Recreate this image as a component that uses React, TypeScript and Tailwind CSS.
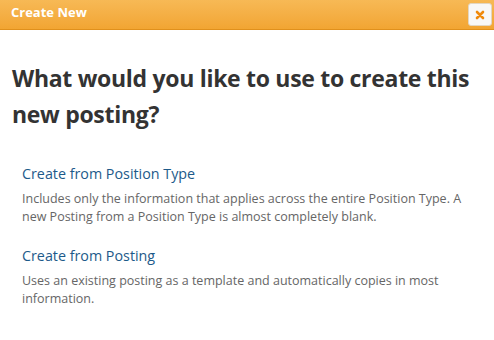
import React from "react";

const options = [
  {
    title: "Create from Position Type",
    text: "Includes only the information that applies across the entire Position Type. A new Posting from a Position Type is almost completely blank.",
  },
  {
    title: "Create from Posting",
    text: "Uses an existing posting as a template and automatically copies in most information.",
  },
];

export default function App() {
  return (
    <div className="w-[494px] h-[340px] bg-white overflow-hidden font-['Open_Sans',sans-serif]">
      <div className="h-[30px] flex items-start justify-between pl-[11px] pr-[2px] pt-[3px] bg-gradient-to-b from-[#f7b955] to-[#f2a532] border-b-[1px] border-[#e0901c]">
        <span className="mt-[1px] text-white font-bold text-[13px] leading-[16px]">Create New</span>
        <button className="w-[24px] h-[23px] rounded-[3px] bg-[#f8f8f8] border border-[#e2d6c2] flex items-center justify-center">
          <svg width="10" height="10" viewBox="0 0 10 10">
            <path d="M2 2 L8 8 M8 2 L2 8" stroke="#f08a0c" strokeWidth="2.6" strokeLinecap="round" />
          </svg>
        </button>
      </div>
      <div className="px-[12px] pt-[30px]">
        <h1 className="text-[23px] leading-[36px] font-bold tracking-[-0.3px] text-[#333]">
          What would you like to use to create this new posting?
        </h1>
        <div className="pl-[10px] pr-[16px] pt-[32px] flex flex-col gap-[20px]">
          {options.map((o) => (
            <div key={o.title}>
              <a href="#" className="block text-[14.3px] leading-[20px] text-[#1d5a8a]">
                {o.title}
              </a>
              <p className="mt-[6px] text-[12.5px] leading-[18px] text-[#666]">{o.text}</p>
            </div>
          ))}
        </div>
      </div>
    </div>
  );
}
